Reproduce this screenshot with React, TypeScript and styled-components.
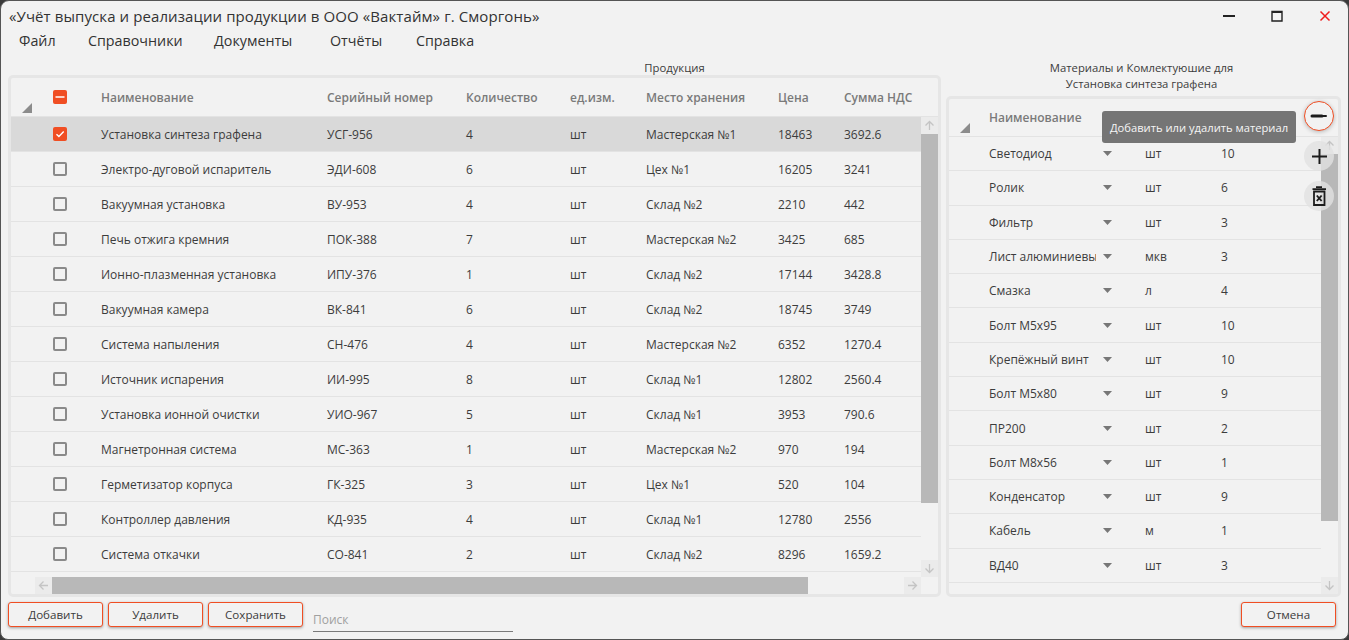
import styled, { createGlobalStyle } from "styled-components";

const products = [
  ["Установка синтеза графена", "УСГ-956", "4", "шт", "Мастерская №1", "18463", "3692.6"],
  ["Электро-дуговой испаритель", "ЭДИ-608", "6", "шт", "Цех №1", "16205", "3241"],
  ["Вакуумная установка", "ВУ-953", "4", "шт", "Склад №2", "2210", "442"],
  ["Печь отжига кремния", "ПОК-388", "7", "шт", "Мастерская №2", "3425", "685"],
  ["Ионно-плазменная установка", "ИПУ-376", "1", "шт", "Склад №2", "17144", "3428.8"],
  ["Вакуумная камера", "ВК-841", "6", "шт", "Склад №2", "18745", "3749"],
  ["Система напыления", "СН-476", "4", "шт", "Мастерская №2", "6352", "1270.4"],
  ["Источник испарения", "ИИ-995", "8", "шт", "Склад №1", "12802", "2560.4"],
  ["Установка ионной очистки", "УИО-967", "5", "шт", "Склад №1", "3953", "790.6"],
  ["Магнетронная система", "МС-363", "1", "шт", "Мастерская №2", "970", "194"],
  ["Герметизатор корпуса", "ГК-325", "3", "шт", "Цех №1", "520", "104"],
  ["Контроллер давления", "КД-935", "4", "шт", "Склад №1", "12780", "2556"],
  ["Система откачки", "СО-841", "2", "шт", "Склад №2", "8296", "1659.2"],
];

const materials = [
  ["Светодиод", "шт", "10"],
  ["Ролик", "шт", "6"],
  ["Фильтр", "шт", "3"],
  ["Лист алюминиевый", "мкв", "3"],
  ["Смазка", "л", "4"],
  ["Болт М5х95", "шт", "10"],
  ["Крепёжный винт", "шт", "10"],
  ["Болт М5х80", "шт", "9"],
  ["ПР200", "шт", "2"],
  ["Болт М8х56", "шт", "1"],
  ["Конденсатор", "шт", "9"],
  ["Кабель", "м", "1"],
  ["ВД40", "шт", "3"],
];

const PRODUCT_COLUMNS = "28px 42px 226px 139px 104px 76px 132px 66px 97px";
const MATERIAL_COLUMNS = "20px 127px 29px 76px 120px";

const GlobalStyle = createGlobalStyle`
  html, body {
    margin: 0;
    height: 100%;
    background: #3a3a3a;
    overflow: hidden;
  }
  #root {
    height: 100%;
  }
`;

const Window = styled.div`
  width: 1349px;
  height: 640px;
  box-sizing: border-box;
  display: flex;
  flex-direction: column;
  background: #f2f2f2;
  border: 1px solid #555;
  border-radius: 9px 9px 8px 8px;
  font-family: "Open Sans", "Noto Sans", sans-serif;
  font-size: 12px;
  color: #3c3c3c;
  overflow: hidden;
`;

const TitleBar = styled.div`
  height: 30px;
  flex: none;
  display: flex;
  align-items: center;
  justify-content: space-between;
  padding-left: 8px;
`;

const Title = styled.div`
  font-size: 15px;
  letter-spacing: 0.09px;
  color: #333;
`;

const WindowControls = styled.div`
  display: flex;
  align-items: center;
  gap: 36px;
  padding-right: 17px;
`;

const ControlIcon = styled.svg`
  display: block;
  width: 12px;
  height: 12px;
`;

const MenuBar = styled.nav`
  height: 20px;
  flex: none;
  display: grid;
  grid-template-columns: 69px 126px 116px 86px auto;
  justify-content: start;
  padding-left: 18px;
  font-size: 14.3px;
  line-height: 19px;
  color: #333;
`;

const Content = styled.main`
  flex: 1;
  min-height: 0;
  display: flex;
  gap: 5px;
  padding: 9px 7px 0 7px;
`;

const Section = styled.section<{ $width: number }>`
  width: ${(p) => p.$width}px;
  flex: none;
  display: flex;
  flex-direction: column;
  justify-content: flex-end;
`;

const SectionTitle = styled.div<{ $inset: string; $gap: number }>`
  padding: ${(p) => p.$inset};
  margin-bottom: ${(p) => p.$gap}px;
  font-size: 11.3px;
  line-height: 16px;
  text-align: center;
  color: #3c3c3c;
`;

const Panel = styled.div<{ $height: number }>`
  height: ${(p) => p.$height}px;
  box-sizing: border-box;
  border: 3px solid #e6e6e6;
  border-radius: 5px;
  display: flex;
  flex-direction: column;
  overflow: hidden;
`;

const GridRow = styled.div<{ $columns: string; $height: number; $selected?: boolean }>`
  display: grid;
  grid-template-columns: ${(p) => p.$columns};
  height: ${(p) => p.$height}px;
  box-sizing: border-box;
  align-items: center;
  border-bottom: 1px solid #e3e3e3;
  background: ${(p) => (p.$selected ? "#d9d9d9" : "transparent")};
`;

const HeaderCell = styled.div`
  padding-left: 20px;
  font-weight: 600;
  color: #7a7a7a;
  white-space: nowrap;
`;

const Cell = styled.div`
  padding-left: 20px;
  white-space: nowrap;
  overflow: hidden;
`;

const CheckCell = styled.div`
  display: flex;
  justify-content: center;
`;

const SortCell = styled.div`
  align-self: end;
  padding: 0 0 3px 11px;
`;

const SortMark = styled.svg`
  display: block;
  width: 10px;
  height: 10px;
`;

const Check = styled.div<{ $on?: boolean }>`
  width: 14px;
  height: 14px;
  box-sizing: border-box;
  border-radius: 2px;
  border: ${(p) => (p.$on ? "none" : "2px solid #8a8a8a")};
  background: ${(p) => (p.$on ? "#f04e23" : "transparent")};
  display: flex;
  align-items: center;
  justify-content: center;
`;

const DropArrow = styled.svg`
  display: block;
  width: 9px;
  height: 5px;
  margin-left: 7px;
`;

const Body = styled.div`
  flex: 1;
  min-height: 0;
  display: flex;
`;

const Rows = styled.div`
  flex: 1;
  min-width: 0;
`;

const VScroll = styled.div`
  width: 17px;
  flex: none;
  display: flex;
  flex-direction: column;
`;

const HScroll = styled.div`
  height: 17px;
  flex: none;
  display: flex;
  padding: 0 17px 0 24px;
`;

const ScrollButton = styled.div`
  width: 17px;
  height: 17px;
  flex: none;
  background: #ebebeb;
  display: flex;
  align-items: center;
  justify-content: center;
`;

const ScrollTrack = styled.div`
  flex: 1;
  display: flex;
`;

const ScrollThumb = styled.div<{ $size: number }>`
  flex: 0 0 ${(p) => p.$size}%;
  background: #b8b8b8;
`;

const ArrowIcon = styled.svg`
  display: block;
  width: 11px;
  height: 11px;
`;

const BottomBar = styled.footer`
  height: 42px;
  flex: none;
  box-sizing: border-box;
  display: flex;
  align-items: flex-start;
  gap: 5px;
  padding: 5px 12px 0 7px;
`;

const Button = styled.button`
  width: 95px;
  height: 25px;
  padding: 0;
  box-sizing: border-box;
  background: #f2f2f2;
  border: 1px solid #f04e23;
  border-radius: 3px;
  box-shadow: 0 1px 3px rgba(0, 0, 0, 0.35);
  font: inherit;
  font-size: 11.6px;
  font-weight: 500;
  color: #3c3c3c;
`;

const SearchBox = styled.div`
  width: 200px;
  height: 30px;
  margin-left: 5px;
  box-sizing: border-box;
  padding-top: 9px;
  line-height: 17px;
  border-bottom: 1px solid #7a7a7a;
  color: #a0a0a0;
`;

const Spacer = styled.div`
  flex: 1;
`;

const ActionStack = styled.div`
  position: absolute;
  left: 1304px;
  top: 101px;
  display: flex;
  flex-direction: column;
  gap: 10px;
`;

const Fab = styled.div<{ $active?: boolean }>`
  width: 30px;
  height: 30px;
  box-sizing: border-box;
  border-radius: 50%;
  display: flex;
  align-items: center;
  justify-content: center;
  background: ${(p) => (p.$active ? "#f2f2f2" : "rgba(225, 225, 225, 0.8)")};
  border: ${(p) => (p.$active ? "1px solid #f04e23" : "none")};
  box-shadow: ${(p) => (p.$active ? "0 1px 4px rgba(0, 0, 0, 0.25)" : "none")};
`;

const FabIcon = styled.svg`
  display: block;
  width: 20px;
  height: 20px;
`;

const Tooltip = styled.div`
  position: absolute;
  left: 1102px;
  top: 111px;
  width: 194px;
  height: 32px;
  border-radius: 3px;
  background: #757575;
  color: #f5f5f5;
  font-size: 11.2px;
  line-height: 33px;
  text-align: center;
  white-space: nowrap;
`;

const Arrow = ({ dir }: { dir: "up" | "down" | "left" | "right" }) => {
  const rotate = { up: 0, right: 90, down: 180, left: 270 }[dir];
  return (
    <ArrowIcon viewBox="0 0 11 11" style={{ transform: `rotate(${rotate}deg)` }}>
      <path d="M5.5 10V1.5M1.5 5.5l4-4 4 4" fill="none" stroke="#c4c4c4" strokeWidth="1.3" />
    </ArrowIcon>
  );
};

const Sort = () => (
  <SortCell>
    <SortMark viewBox="0 0 10 10">
      <path d="M10 0V10H0Z" fill="#8c8c8c" />
    </SortMark>
  </SortCell>
);

const CheckBox = ({ mark }: { mark?: "check" | "dash" }) => (
  <Check $on={!!mark}>
    {mark === "check" && (
      <svg width="10" height="10" viewBox="0 0 10 10">
        <path d="M1.5 5.2l2.4 2.4 4.8-5" fill="none" stroke="#fff" strokeWidth="1.4" />
      </svg>
    )}
    {mark === "dash" && (
      <svg width="10" height="10" viewBox="0 0 10 10">
        <path d="M0.5 5h9" fill="none" stroke="#fff" strokeWidth="1.6" />
      </svg>
    )}
  </Check>
);

const App = () => {
  return (
    <Window>
      <GlobalStyle />
      <TitleBar>
        <Title>«Учёт выпуска и реализации продукции в ООО «Вактайм» г. Сморгонь»</Title>
        <WindowControls>
          <ControlIcon viewBox="0 0 12 12">
            <path d="M0 6h12" stroke="#222" strokeWidth="2" />
          </ControlIcon>
          <ControlIcon viewBox="0 0 12 12">
            <path d="M1 1.5h10v9.5H1Z" fill="none" stroke="#222" strokeWidth="1.4" />
            <path d="M1 2h10" stroke="#222" strokeWidth="2" />
          </ControlIcon>
          <ControlIcon viewBox="0 0 12 12">
            <path d="M1.5 1.5l9 9M10.5 1.5l-9 9" stroke="#f01c1c" strokeWidth="1.5" />
          </ControlIcon>
        </WindowControls>
      </TitleBar>
      <MenuBar>
        <span>Файл</span>
        <span>Справочники</span>
        <span>Документы</span>
        <span>Отчёты</span>
        <span>Справка</span>
      </MenuBar>
      <Content>
        <Section $width={933}>
          <SectionTitle $inset="0 0 0 400px" $gap={-1}>
            Продукция
          </SectionTitle>
          <Panel $height={522}>
            <GridRow $columns={PRODUCT_COLUMNS} $height={39}>
              <Sort />
              <CheckCell>
                <CheckBox mark="dash" />
              </CheckCell>
              <HeaderCell>Наименование</HeaderCell>
              <HeaderCell>Серийный номер</HeaderCell>
              <HeaderCell>Количество</HeaderCell>
              <HeaderCell>ед.изм.</HeaderCell>
              <HeaderCell>Место хранения</HeaderCell>
              <HeaderCell>Цена</HeaderCell>
              <HeaderCell>Сумма НДС</HeaderCell>
            </GridRow>
            <Body>
              <Rows>
                {products.map((row, i) => (
                  <GridRow key={row[1]} $columns={PRODUCT_COLUMNS} $height={35} $selected={i === 0}>
                    <span />
                    <CheckCell>
                      <CheckBox mark={i === 0 ? "check" : undefined} />
                    </CheckCell>
                    {row.map((value, j) => (
                      <Cell key={j}>{value}</Cell>
                    ))}
                  </GridRow>
                ))}
              </Rows>
              <VScroll>
                <ScrollButton>
                  <Arrow dir="up" />
                </ScrollButton>
                <ScrollThumb $size={80.3} />
                <Spacer />
                <ScrollButton>
                  <Arrow dir="down" />
                </ScrollButton>
              </VScroll>
            </Body>
            <HScroll>
              <ScrollButton>
                <Arrow dir="left" />
              </ScrollButton>
              <ScrollTrack>
                <ScrollThumb $size={88.7} />
              </ScrollTrack>
              <ScrollButton>
                <Arrow dir="right" />
              </ScrollButton>
            </HScroll>
          </Panel>
        </Section>
        <Section $width={395}>
          <SectionTitle $inset="0 4px 0 0" $gap={4}>
            Материалы и Комлектуюшие для
            <br />
            Установка синтеза графена
          </SectionTitle>
          <Panel $height={501}>
            <GridRow $columns={MATERIAL_COLUMNS} $height={38}>
              <Sort />
              <HeaderCell>Наименование</HeaderCell>
            </GridRow>
            <Body>
              <Rows>
                {materials.map((row) => (
                  <GridRow key={row[0]} $columns={MATERIAL_COLUMNS} $height={34.3}>
                    <span />
                    <Cell>{row[0]}</Cell>
                    <DropArrow viewBox="0 0 9 5">
                      <path d="M0 0h9L4.5 5Z" fill="#777" />
                    </DropArrow>
                    <Cell>{row[1]}</Cell>
                    <Cell>{row[2]}</Cell>
                  </GridRow>
                ))}
              </Rows>
              <VScroll>
                <ScrollButton>
                  <Arrow dir="up" />
                </ScrollButton>
                <ScrollThumb $size={80.3} />
                <Spacer />
                <ScrollButton>
                  <Arrow dir="down" />
                </ScrollButton>
              </VScroll>
            </Body>
          </Panel>
        </Section>
      </Content>
      <BottomBar>
        <Button>Добавить</Button>
        <Button>Удалить</Button>
        <Button>Сохранить</Button>
        <SearchBox>Поиск</SearchBox>
        <Spacer />
        <Button>Отмена</Button>
      </BottomBar>
      <Tooltip>Добавить или удалить материал</Tooltip>
      <ActionStack>
        <Fab $active>
          <FabIcon viewBox="0 0 20 20">
            <path d="M3 10h10" stroke="#1c1c1c" strokeWidth="3" strokeLinecap="round" />
            <path d="M13 10h4" stroke="#1c1c1c" strokeWidth="2" strokeLinecap="round" />
          </FabIcon>
        </Fab>
        <Fab>
          <FabIcon viewBox="0 0 20 20">
            <path d="M10.5 3v15M3 10.5h15" stroke="#1c1c1c" strokeWidth="2" />
          </FabIcon>
        </Fab>
        <Fab>
          <FabIcon viewBox="0 0 20 20">
            <path d="M7 1.2h6M3.5 3.2h13.5" stroke="#1c1c1c" strokeWidth="1.8" />
            <path d="M5 5.5h10.5v13.5H5Z" fill="none" stroke="#1c1c1c" strokeWidth="1.8" />
            <path d="M7.8 9.5l4.8 5.5M12.6 9.5l-4.8 5.5" stroke="#1c1c1c" strokeWidth="1.9" />
          </FabIcon>
        </Fab>
      </ActionStack>
    </Window>
  );
};

export default App;
